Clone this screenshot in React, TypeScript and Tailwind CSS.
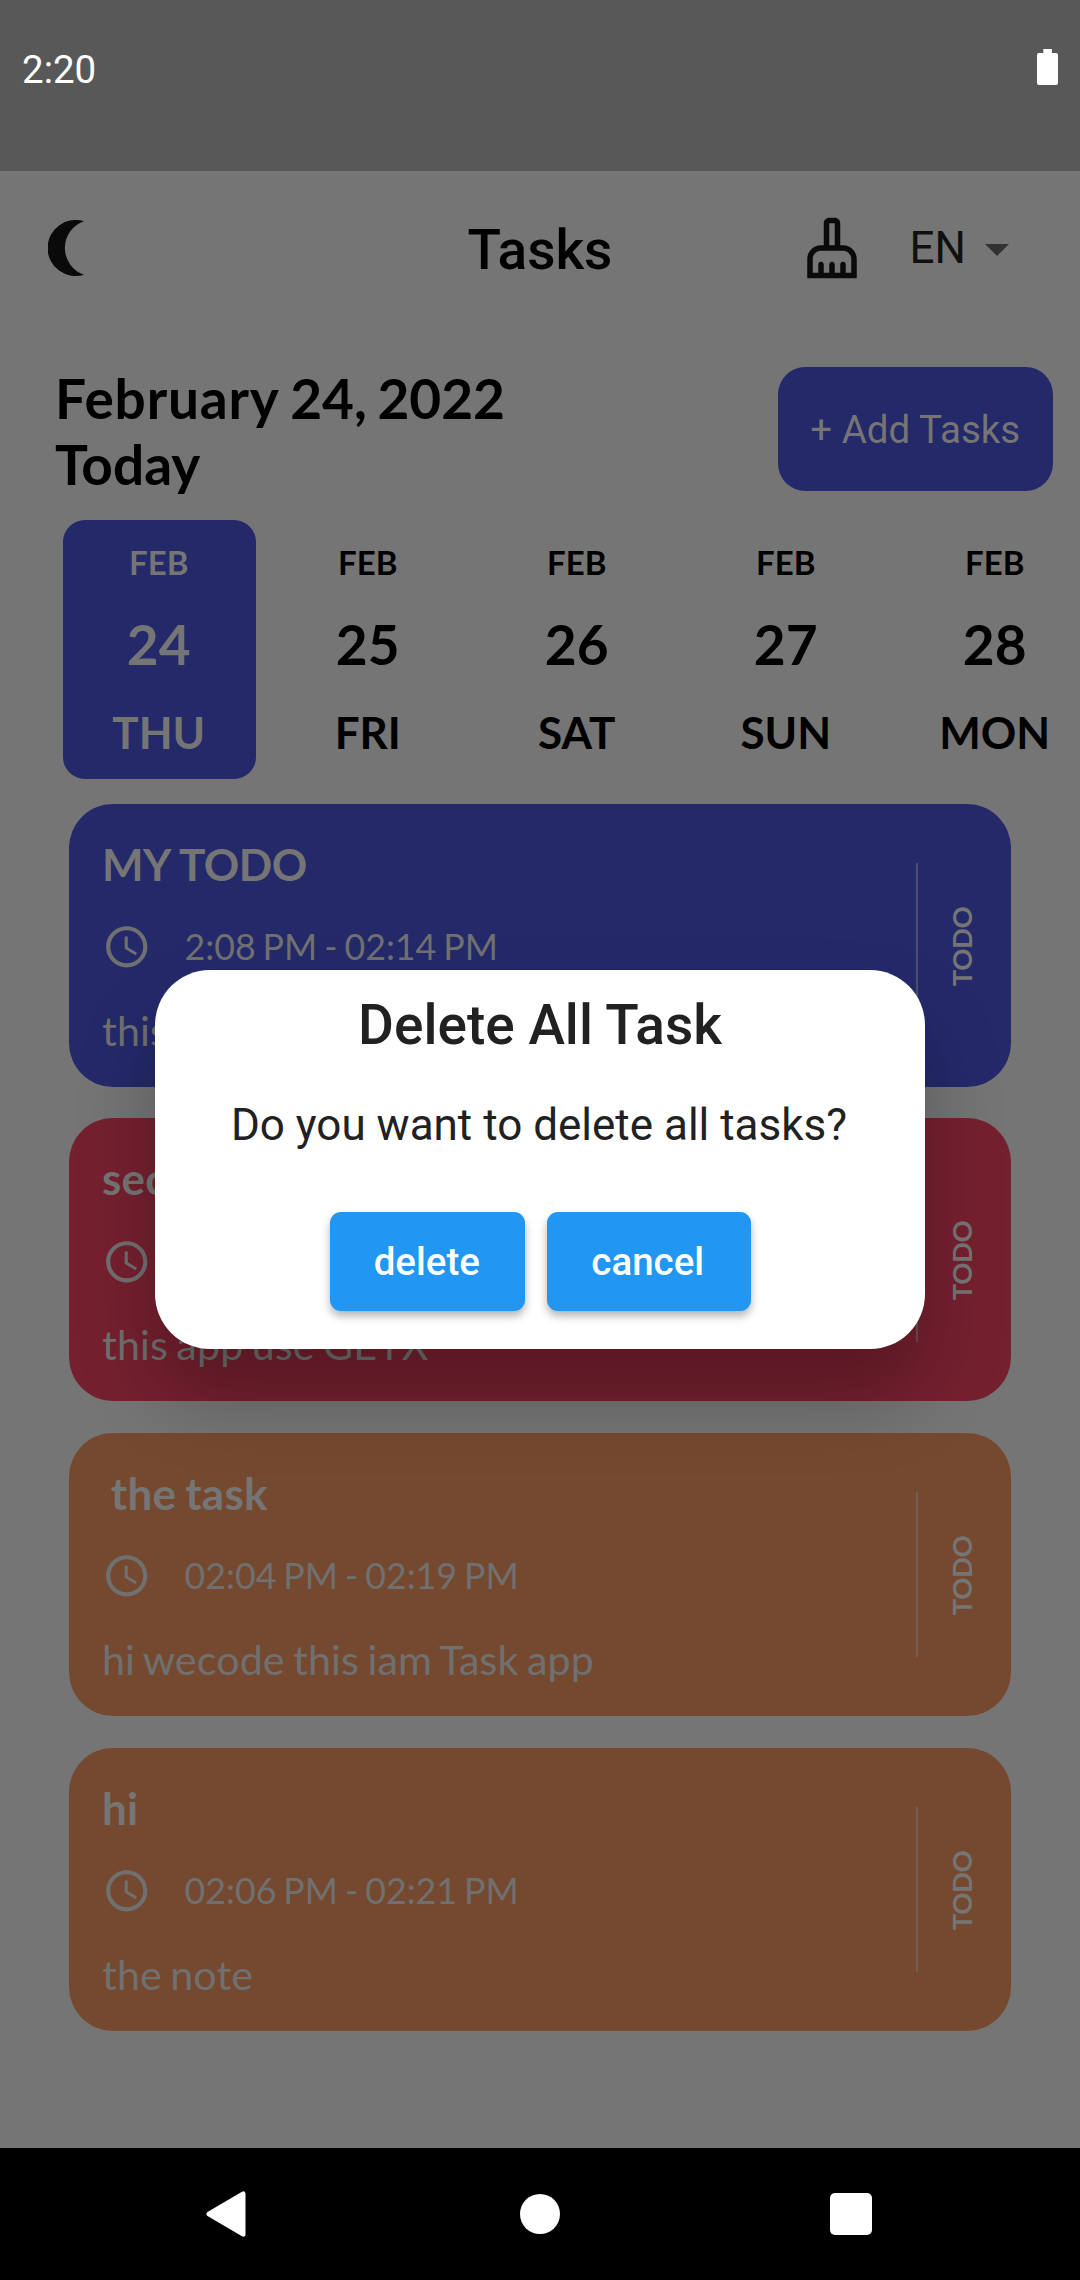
import { MdOutlineCleaningServices, MdAccessTime } from "react-icons/md";

const days = [
  { date: "24", day: "THU", active: true },
  { date: "25", day: "FRI", active: false },
  { date: "26", day: "SAT", active: false },
  { date: "27", day: "SUN", active: false },
  { date: "28", day: "MON", active: false },
];

const tasks = [
  { title: "MY TODO", time: "2:08 PM - 02:14 PM", note: "this", color: "bg-[#24296a]", tracking: "tracking-[-0.5px] [word-spacing:0.8px]" },
  { title: "second", time: "02:10 PM", note: "this app use GETX", color: "bg-[#75202f]", tracking: "tracking-[0.2px]" },
  { title: "\u00a0the task", time: "02:04 PM - 02:19 PM", note: "hi wecode this iam Task app", color: "bg-[#75492f]", tracking: "tracking-[0.3px] [word-spacing:-2.2px]" },
  { title: "hi", time: "02:06 PM - 02:21 PM", note: "the note", color: "bg-[#75492f]", tracking: "tracking-[0.2px]" },
];

function StatusBar() {
  return (
    <div className="flex h-[171px] items-start justify-between bg-[#585858] px-[22px] text-white">
      <span className="mt-[47px] text-[38.5px] leading-[46px]">2:20</span>
      <svg className="mt-[49px] h-[36px] w-[21px]" viewBox="0 0 21 36" fill="currentColor">
        <path d="M6.3 0h8.6v4H19a2 2 0 0 1 2 2v28a2 2 0 0 1-2 2H2a2 2 0 0 1-2-2V6a2 2 0 0 1 2-2h4.3z" />
      </svg>
    </div>
  );
}

function AppBar() {
  return (
    <header className="grid h-[154px] grid-cols-3 items-center">
      <svg className="ml-[48px] h-[56px] w-[36px]" viewBox="0 0 36 56" fill="#0a0a0a">
        <path d="M36 1.3A28 28 0 1 0 36 54.7A28.2 28.2 0 0 1 36 1.3z" />
      </svg>
      <h1 className="mt-[4px] text-center text-[55px] font-medium leading-[64px] text-black">Tasks</h1>
      <div className="flex items-center pl-[79px] text-[#0a0a0a]">
        <MdOutlineCleaningServices className="size-[66px] shrink-0" />
        <span className="ml-[44.5px] text-[44px] leading-[52px] text-[#101010]">EN</span>
        <svg className="ml-[19px] mt-[3px] h-[12px] w-[24px]" viewBox="0 0 24 12" fill="#323232">
          <path d="M0 0h24L12 12z" />
        </svg>
      </div>
    </header>
  );
}

function DayTile({ date, day, active }: { date: string; day: string; active: boolean }) {
  return (
    <div
      className={`flex h-[259px] w-[192.5px] shrink-0 flex-col items-center rounded-[22px] pr-[1px] pt-[22px] font-bold ${
        active ? "bg-[#24296a] text-[#757575]" : "text-black"
      }`}
    >
      <span className="text-[33px] leading-[40px]">FEB</span>
      <span className="mt-[29px] text-[55px] leading-[66px]">{date}</span>
      <span className="mt-[29px] text-[44px] leading-[53px]">{day}</span>
    </div>
  );
}

type Task = { title: string; time: string; note: string; color: string; tracking: string };

function TaskCard({ title, time, note, color, tracking }: Task) {
  return (
    <article className={`flex h-[283px] rounded-[44px] pl-[33px] ${color}`}>
      <div className="flex flex-1 flex-col whitespace-nowrap text-[#707070]">
        <h3 className={`mt-[34px] text-[44px] font-bold leading-[53px] text-[#757575] ${tracking}`}>
          {title}
        </h3>
        <div className="mt-[31px] flex h-[50px] items-center">
          <MdAccessTime className="size-[49.5px]" />
          <span className="ml-[33px] text-[35.75px] leading-[43px] [word-spacing:-2.2px]">{time}</span>
        </div>
        <p className="mt-[33px] text-[41.25px] leading-[50px] tracking-[0.1px] [word-spacing:-2.3px]">{note}</p>
      </div>
      <div className="mt-[59px] h-[165px] w-[2px] bg-[#707070]/55" />
      <div className="flex w-[93px] items-center justify-center pr-[6px] pt-[2px]">
        <span className="-rotate-90 text-[27.5px] font-bold leading-[33px] tracking-[-0.4px] text-[#757575]">TODO</span>
      </div>
    </article>
  );
}

function NavBar() {
  return (
    <nav className="flex h-[132px] items-center bg-black pl-[206px] text-white">
      <svg className="h-[46px] w-[40px]" viewBox="0 0 40 46" fill="currentColor">
        <path d="M36 .8Q39.5-.8 39.5 3V43Q39.5 46.8 36 45.2L1.5 25Q-.8 23 1.5 21z" />
      </svg>
      <div className="ml-[274px] size-[40px] rounded-full bg-white" />
      <div className="ml-[270px] size-[41.5px] rounded-[5px] bg-white" />
    </nav>
  );
}

function DeleteDialog() {
  return (
    <div
      role="dialog"
      className="absolute left-[155px] top-[970px] flex h-[379px] w-[770px] flex-col items-center rounded-[55px] bg-white text-[#212121] shadow-[0_48px_76px_rgba(0,0,0,0.25)]"
    >
      <h2 className="mt-[23px] text-[55px] font-medium leading-[64px]">Delete All Task</h2>
      <p className="mt-[42px] pr-[2px] text-[44px] leading-[52px]">Do you want to delete all tasks?</p>
      <div className="mt-[61px] flex gap-[22px] text-[38.5px] font-medium text-white">
        <button className="h-[99px] w-[195.5px] rounded-[11px] bg-[#2196f3] pr-[1px] shadow-[0_5px_8px_rgba(0,0,0,0.3)]">delete</button>
        <button className="h-[99px] w-[203.5px] rounded-[11px] bg-[#2196f3] pr-[2px] shadow-[0_5px_8px_rgba(0,0,0,0.3)]">cancel</button>
      </div>
    </div>
  );
}

export default function App() {
  return (
    <div className="relative flex h-[2280px] w-[1080px] flex-col overflow-hidden bg-[#757575] font-['Roboto',sans-serif]">
      <StatusBar />
      <AppBar />
      <main className="flex-1 font-['Lato',sans-serif]">
        <section className="mt-[42px] flex h-[132px] items-start justify-between pl-[55px] pr-[27px]">
          <h2 className="-mt-[2px] text-[55px] font-bold leading-[66px] text-black [word-spacing:-2.8px]">
            <span className="tracking-[0.8px]">February</span> 24, 2022
            <br />
            Today
          </h2>
          <button className="h-[124px] w-[275.5px] rounded-[27.5px] bg-[#24296a] pt-[2px] font-['Roboto',sans-serif] text-[38.5px] text-[#757575]">
            + Add Tasks
          </button>
        </section>
        <section className="mt-[21px] flex gap-[16.5px] pl-[63px]">
          {days.map((d) => (
            <DayTile key={d.date} {...d} />
          ))}
        </section>
        <section className="ml-[69px] mt-[24.8px] flex w-[942px] flex-col gap-[31.6px]">
          {tasks.map((t) => (
            <TaskCard key={t.title} {...t} />
          ))}
        </section>
      </main>
      <NavBar />
      <DeleteDialog />
    </div>
  );
}
